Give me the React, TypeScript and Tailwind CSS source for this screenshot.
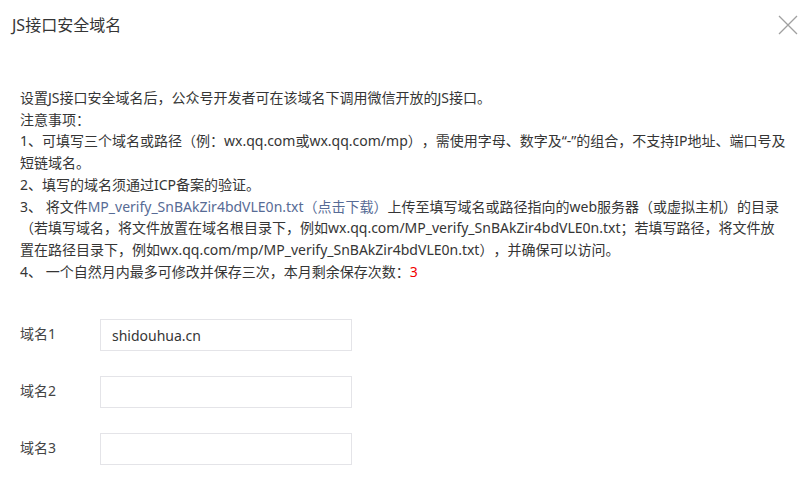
import React from 'react';

const FONT = 'font-["Noto_Sans","Noto_Sans_CJK_SC",sans-serif]';

const App: React.FC = () => {
  const fields = [
    { label: '域名1', value: 'shidouhua.cn' },
    { label: '域名2', value: '' },
    { label: '域名3', value: '' },
  ];

  return (
    <div className={`w-[811px] h-[486px] bg-white text-[#353535] overflow-hidden [text-spacing-trim:space-all] ${FONT}`}>
      {/* header */}
      <div className="flex items-center justify-between h-[50px] pl-[12px] pr-[13px]">
        <h3 className="text-[16px] font-normal">JS接口安全域名</h3>
        <button className="w-[20px] h-[20px] text-[#a0a0a0]">
          <svg viewBox="0 0 20 20" width="20" height="20" fill="none" stroke="currentColor" strokeWidth="1.3">
            <path d="M1 1 L19 19 M19 1 L1 19" />
          </svg>
        </button>
      </div>

      <div className="pl-[20px] pr-[21px] pt-[37px]">
        <div className="text-[14px] leading-[21.7px]">
          <p>设置JS接口安全域名后，公众号开发者可在该域名下调用微信开放的JS接口。</p>
          <p>注意事项：</p>
          <p>1、可填写三个域名或路径（例：wx.qq.com或wx.qq.com/mp），需使用字母、数字及“-”的组合，不支持IP地址、端口号及短链域名。</p>
          <p>2、填写的域名须通过ICP备案的验证。</p>
          <p className="pr-[5px]">
            3、 将文件<a className="text-[#576b95]">MP_verify_SnBAkZir4bdVLE0n.txt（点击下载）</a>上传至填写域名或路径指向的web服务器（或虚拟主机）的目录（若填写域名，将文件放置在域名根目录下，例如wx.qq.com/MP_verify_SnBAkZir4bdVLE0n.txt；若填写路径，将文件放置在路径目录下，例如wx.qq.com/mp/MP_verify_SnBAkZir4bdVLE0n.txt），并确保可以访问。
          </p>
          <p>
            4、 一个自然月内最多可修改并保存三次，本月剩余保存次数：<span className="text-[#f20000]">3</span>
          </p>
        </div>

        <div className="mt-[37px] flex flex-col gap-[25px]">
          {fields.map((f) => (
            <div key={f.label} className="flex items-center">
              <label className="w-[80px] text-[14px] text-[#444] -mt-[3px]">{f.label}</label>
              <div className="w-[252px] h-[32px] border border-[#e4e4e8] px-[11px] flex items-center text-[14px] text-[#353535]">
                {f.value}
              </div>
            </div>
          ))}
        </div>
      </div>
    </div>
  );
};

export default App;
